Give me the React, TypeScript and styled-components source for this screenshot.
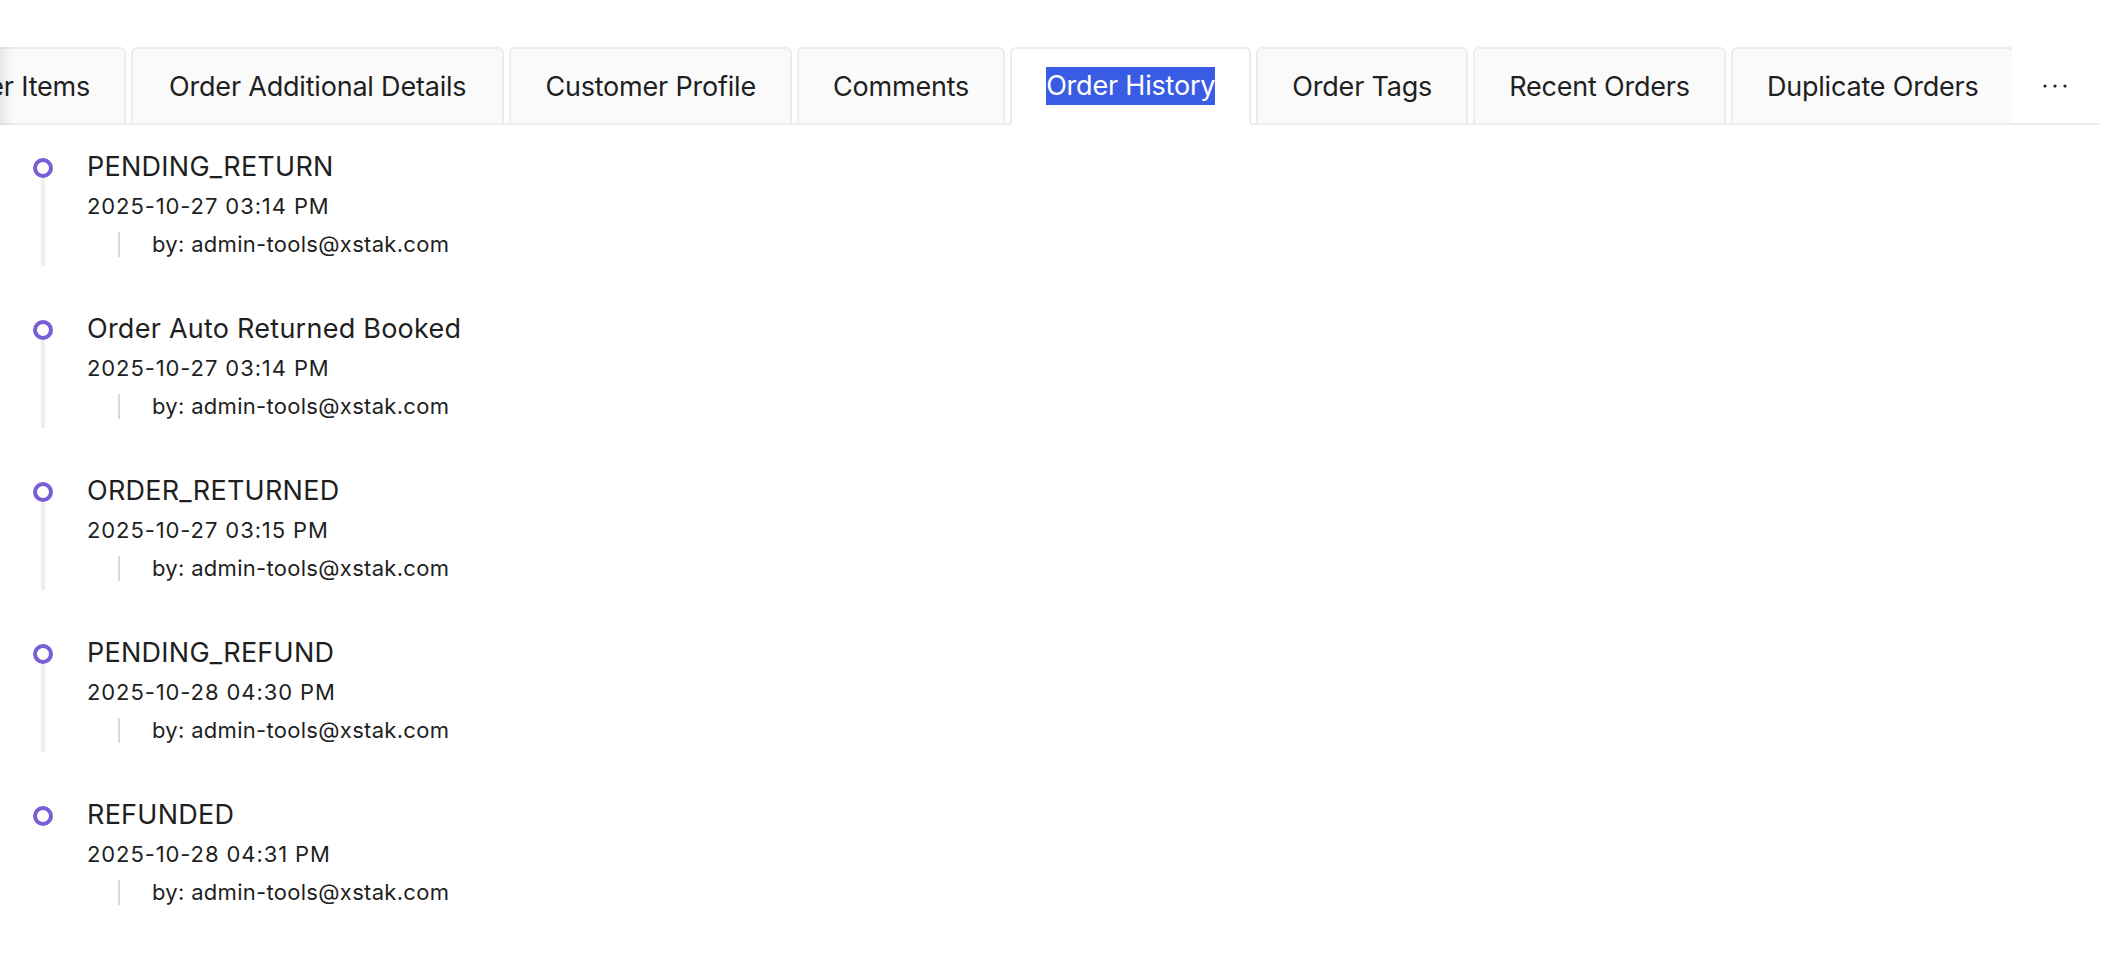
import React from 'react'
import styled, { createGlobalStyle } from 'styled-components'

const GlobalStyle = createGlobalStyle`
  body {
    margin: 0;
    background: #fff;
    font-family: Inter, "Noto Sans", sans-serif;
    color: #1f1f1f;
  }
`

const Page = styled.div`
  padding-top: 47px;
  padding-right: 28px;
`

const TabsNav = styled.div`
  position: relative;
  display: flex;
  align-items: stretch;
  height: 78px;
  &::before {
    content: '';
    position: absolute;
    left: 0;
    right: 0;
    bottom: 0;
    height: 2px;
    background: #ececec;
  }
`

const NavWrap = styled.div`
  position: relative;
  flex: 1;
  overflow: hidden;
  &::before {
    content: '';
    position: absolute;
    left: 0;
    top: 0;
    bottom: 0;
    width: 14px;
    z-index: 2;
    background: linear-gradient(to right, rgba(0, 0, 0, 0.07), rgba(0, 0, 0, 0));
  }
`

const NavList = styled.div<{ $offset: number }>`
  display: flex;
  gap: 5px;
  height: 100%;
  transform: translateX(${(p) => -p.$offset}px);
`

const Tab = styled.div<{ $active?: boolean; $wide?: boolean }>`
  position: relative;
  z-index: 1;
  display: flex;
  align-items: center;
  flex-shrink: 0;
  box-sizing: border-box;
  padding: 0 ${(p) => (p.$wide ? 36 : 34)}px;
  border: 2px solid #ececec;
  border-bottom-color: ${(p) => (p.$active ? '#fff' : '#ececec')};
  border-radius: 6px 6px 0 0;
  background: ${(p) => (p.$active ? '#fff' : '#fafafa')};
  font-size: 27px;
  letter-spacing: -0.2px;
  white-space: nowrap;
  color: #1f1f1f;
`

const Selected = styled.span`
  background: #3a5ce4;
  color: #fff;
  line-height: 34px;
  padding: 2px 0;
`

const MoreButton = styled.div`
  display: flex;
  align-items: center;
  padding: 0 33px 0 31px;
  color: #1f1f1f;
`

const Timeline = styled.div`
  padding-top: 24px;
`

const Item = styled.div<{ $last?: boolean }>`
  display: grid;
  grid-template-columns: 87px 1fr;
  padding-bottom: ${(p) => (p.$last ? 0 : 54)}px;
`

const Rail = styled.div`
  display: flex;
  flex-direction: column;
  align-items: center;
  width: 86px;
`

const Dot = styled.div`
  box-sizing: border-box;
  width: 20px;
  height: 20px;
  margin-top: 9px;
  border: 4px solid #7a5fd4;
  border-radius: 50%;
  background: #fff;
  flex-shrink: 0;
`

const Tail = styled.div`
  flex: 1;
  width: 4px;
  margin-bottom: -9px;
  background: #eeeeee;
`

const Content = styled.div`
  display: flex;
  flex-direction: column;
`

const Title = styled.div`
  font-size: 27px;
  line-height: 36px;
  letter-spacing: 0.25px;
`

const DateText = styled.div`
  margin-top: 6px;
  font-size: 22px;
  line-height: 30px;
  letter-spacing: 0.9px;
`

const ByLine = styled.div`
  margin: 11px 0 0 31px;
  padding-left: 32px;
  border-left: 2px solid #d9d9d9;
  font-size: 22px;
  line-height: 25px;
  letter-spacing: 0.3px;
`

const tabs = [
  'Order Items',
  'Order Additional Details',
  'Customer Profile',
  'Comments',
  'Order History',
  'Order Tags',
  'Recent Orders',
  'Duplicate Orders',
]

const history = [
  { title: 'PENDING_RETURN', date: '2025-10-27 03:14 PM' },
  { title: 'Order Auto Returned Booked', date: '2025-10-27 03:14 PM' },
  { title: 'ORDER_RETURNED', date: '2025-10-27 03:15 PM' },
  { title: 'PENDING_REFUND', date: '2025-10-28 04:30 PM' },
  { title: 'REFUNDED', date: '2025-10-28 04:31 PM' },
]

const Dots = () => (
  <svg width="24" height="6" viewBox="0 0 24 6">
    <circle cx="2" cy="3" r="1.6" fill="#1f1f1f" />
    <circle cx="12" cy="3" r="1.6" fill="#1f1f1f" />
    <circle cx="22" cy="3" r="1.6" fill="#1f1f1f" />
  </svg>
)

const App = () => {
  return (
    <Page>
      <GlobalStyle />
      <TabsNav>
        <NavWrap>
          <NavList $offset={94}>
            {tabs.map((tab) => (
              <Tab
                key={tab}
                $active={tab === 'Order History'}
                $wide={tab === 'Order Additional Details'}
              >
                {tab === 'Order History' ? <Selected>{tab}</Selected> : tab}
              </Tab>
            ))}
          </NavList>
        </NavWrap>
        <MoreButton>
          <Dots />
        </MoreButton>
      </TabsNav>
      <Timeline>
        {history.map((entry, i) => {
          const last = i === history.length - 1
          return (
            <Item key={entry.title} $last={last}>
              <Rail>
                <Dot />
                {!last && <Tail />}
              </Rail>
              <Content>
                <Title>{entry.title}</Title>
                <DateText>{entry.date}</DateText>
                <ByLine>by: admin-tools@xstak.com</ByLine>
              </Content>
            </Item>
          )
        })}
      </Timeline>
    </Page>
  )
}

export default App
